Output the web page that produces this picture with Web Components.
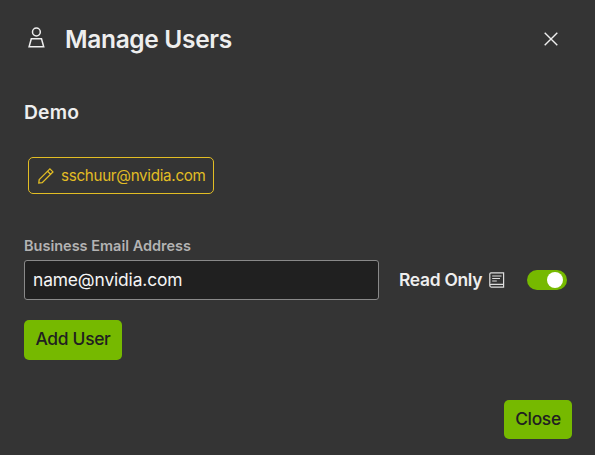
<!DOCTYPE html>
<html lang="en">
<head>
<meta charset="utf-8">
<title>Manage Users</title>
<style>
html,body{margin:0;height:100%;background:#343434}
body{font-family:Inter,"Liberation Sans",sans-serif;color:#eee;overflow:hidden}
</style>
</head>
<body>
<manage-users-dialog></manage-users-dialog>
<script>
const define = (name, html) => customElements.define(name, class extends HTMLElement {
  constructor() {
    super();
    this.attachShadow({mode: 'open'}).innerHTML = html;
  }
});

define('user-icon', `<style>:host{display:block;width:18px;height:24px}svg{display:block}</style>
<svg width="18" height="24" viewBox="0 0 18 24" fill="none" stroke="#eee" stroke-width="1.5"><circle cx="9.4" cy="6" r="3.9"/><path d="M4.3 12.8h10.2l2.2 8H2.1z"/></svg>`);

define('pencil-icon', `<style>:host{display:block;width:18px;height:18px}svg{display:block}</style>
<svg width="18" height="18" viewBox="0 0 18 18" fill="none" stroke="#e2bd24" stroke-width="1.3"><path d="M2.2 12.6L12.9 1.9L15.9 4.9L5.2 15.6L1.8 16.1zM10.6 4.2L13.6 7.2"/></svg>`);

define('book-icon', `<style>:host{display:block;width:16px;height:16px}svg{display:block}</style>
<svg width="16" height="16" viewBox="0 0 16 16" fill="none" stroke="#dedede" stroke-width="1.2"><path d="M14.6 12.4V.8H2Q.8.8.8 2V13.6Q.8 15.1 2.3 15.1H15.2M15.2 12.4H2.3Q.8 12.4.8 13.7M14.6 12.4V15.1M3.2 4H12.5M3.2 6.5H11M3.2 9H7.8"/></svg>`);

define('close-icon', `<style>:host{display:block;width:14px;height:14px}svg{display:block}</style>
<svg width="14" height="14" viewBox="0 0 14 14" stroke="#eee" stroke-width="1.4"><path d="M.7.7L13.3 13.3M13.3.7L.7 13.3"/></svg>`);

define('dialog-header', `<style>
:host{display:flex;align-items:center;height:32px;padding:0 37px 0 27px}
h1{margin:0 auto 0 20px;font-size:24.5px;line-height:32px;font-weight:600;letter-spacing:-.34px;white-space:nowrap}
user-icon{margin-top:-3px}
</style><user-icon></user-icon><h1><slot></slot></h1><close-icon></close-icon>`);

define('user-chip', `<style>
:host{display:flex;align-items:center;box-sizing:border-box;width:186px;height:37px;padding-left:8px;gap:6px;border:1px solid #e2bd24;border-radius:5px;color:#e2bd24;font-size:15.2px;line-height:20px;white-space:nowrap;letter-spacing:-.3px}
</style><pencil-icon></pencil-icon><span><slot></slot></span>`);

define('text-field', `<style>
:host{display:block;width:355px}
label{display:block;font-size:14.5px;line-height:20px;font-weight:600;color:#b3b3b3}
div{box-sizing:border-box;height:40px;margin-top:4px;padding-left:8px;border:1px solid #898989;border-radius:3px;background:#202020;color:#f5f5f5;font-size:17.4px;line-height:38px;letter-spacing:-.14px}
</style><label><slot name="label"></slot></label><div><slot></slot></div>`);

define('toggle-switch', `<style>
:host{display:flex;align-items:center;justify-content:flex-end;box-sizing:border-box;width:40px;height:20px;padding-right:4px;border-radius:10px;background:#76b900}
i{width:16px;height:16px;border-radius:50%;background:#fff}
</style><i></i>`);

define('read-only-option', `<style>
:host{display:flex;align-items:center;height:40px}
span{width:90px;font-size:17.4px;line-height:38px;font-weight:600;white-space:nowrap;letter-spacing:-.28px}
toggle-switch{margin-left:22px}
</style><span><slot></slot></span><book-icon></book-icon><toggle-switch></toggle-switch>`);

define('action-button', `<style>
:host{display:flex;align-items:center;justify-content:center;box-sizing:border-box;padding-bottom:2px;border-radius:5px;background:#76b900;color:#202020;font-size:17.4px;line-height:36px;font-weight:500;white-space:nowrap;letter-spacing:-.3px}
</style><span><slot></slot></span>`);

define('manage-users-dialog', `<style>
:host{display:flex;flex-direction:column;box-sizing:border-box;width:595px;height:455px;padding-top:23px;background:#343434}
h2{margin:44px 0 0 24px;font-size:19.3px;line-height:26px;font-weight:600;letter-spacing:.2px}
user-chip{margin:32px 0 0 28px}
.row{display:flex;align-items:flex-end;gap:20px;margin:42px 0 0 24px}
.add{width:98px;height:40px;margin:20px 0 0 24px}
footer{display:flex;justify-content:flex-end;padding:40px 23px 0 0}
.close{width:68px;height:39px}
</style>
<dialog-header>Manage Users</dialog-header>
<h2>Demo</h2>
<user-chip>sschuur@nvidia.com</user-chip>
<div class="row"><text-field><span slot="label">Business Email Address</span>name@nvidia.com</text-field><read-only-option>Read Only</read-only-option></div>
<action-button class="add">Add User</action-button>
<footer><action-button class="close">Close</action-button></footer>`);
</script>
</body>
</html>
